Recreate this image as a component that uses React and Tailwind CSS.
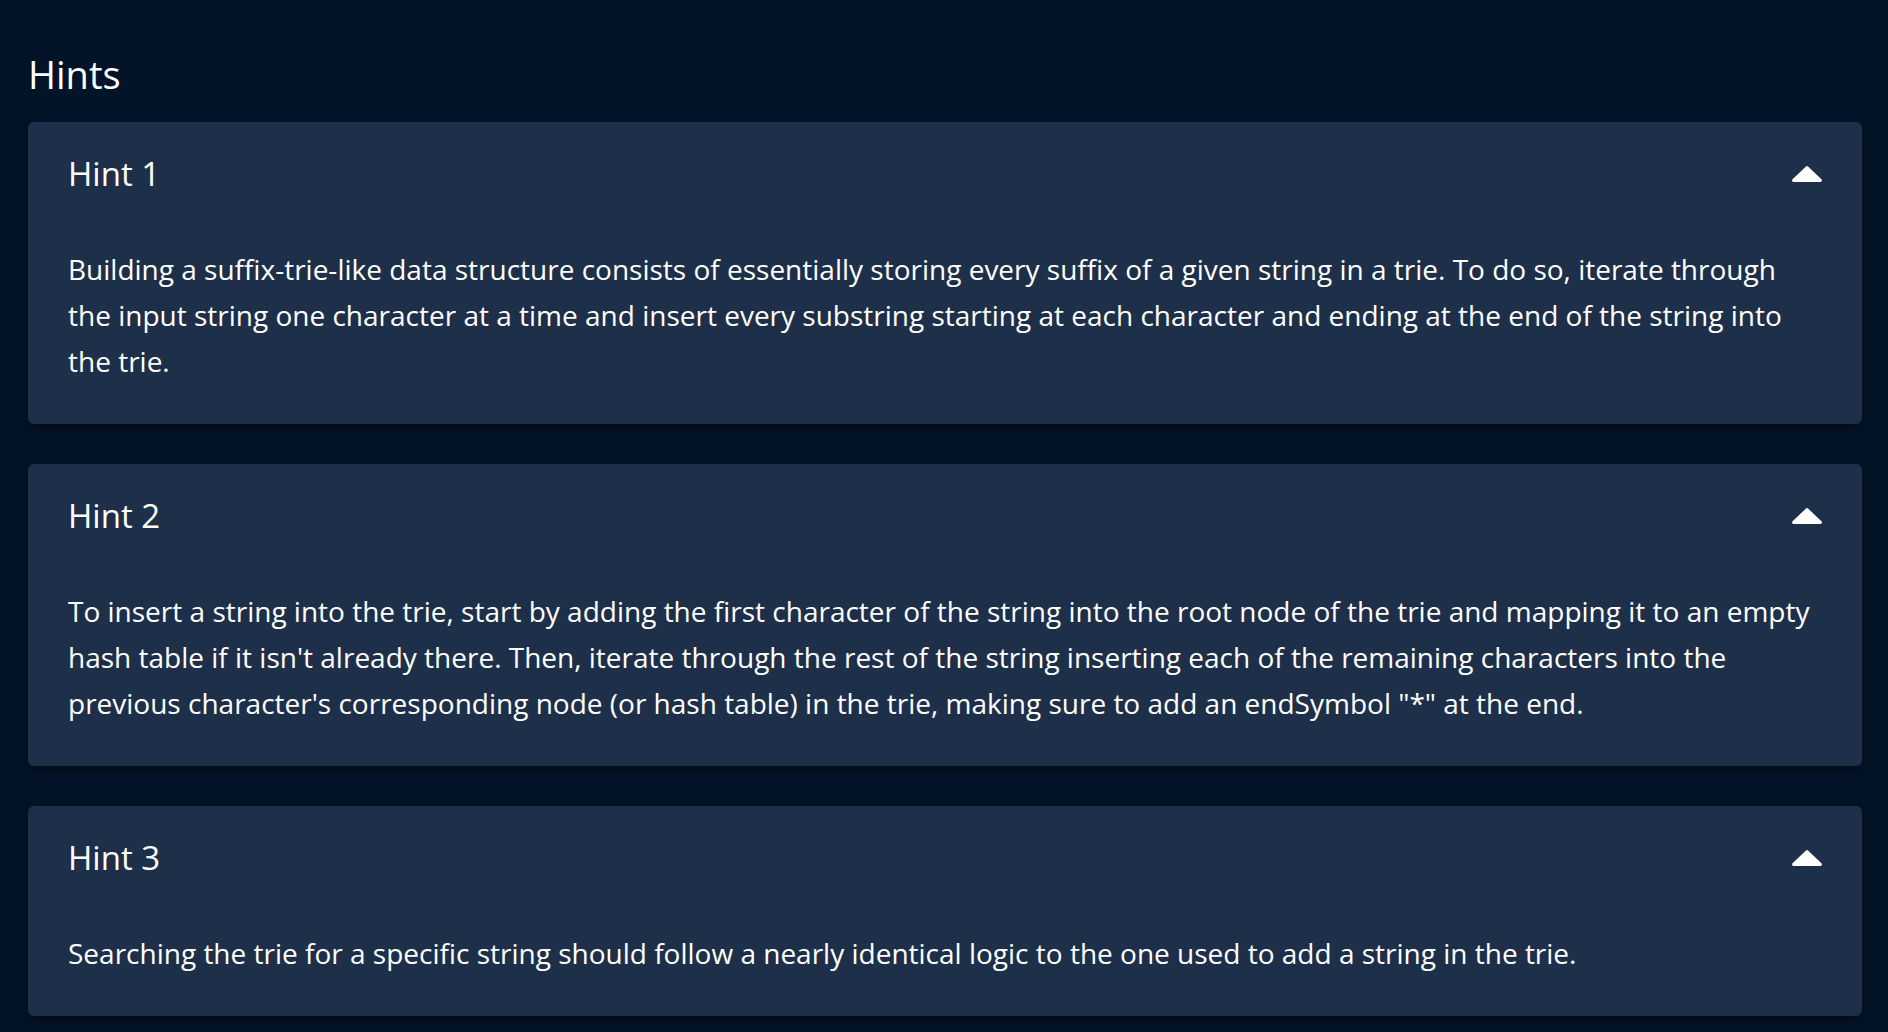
import React from 'react';

const hints = [
    {
        title: 'Hint 1',
        text: 'Building a suffix-trie-like data structure consists of essentially storing every suffix of a given string in a trie. To do so, iterate through the input string one character at a time and insert every substring starting at each character and ending at the end of the string into the trie.',
    },
    {
        title: 'Hint 2',
        text: 'To insert a string into the trie, start by adding the first character of the string into the root node of the trie and mapping it to an empty hash table if it isn\'t already there. Then, iterate through the rest of the string inserting each of the remaining characters into the previous character\'s corresponding node (or hash table) in the trie, making sure to add an endSymbol "*" at the end.',
    },
    {
        title: 'Hint 3',
        text: 'Searching the trie for a specific string should follow a nearly identical logic to the one used to add a string in the trie.',
    },
];

const CaretUp = () => (
    <svg width="30" height="16" viewBox="0 0 30 16" aria-hidden="true">
        <polygon points="15,1.6 28.4,14.4 1.6,14.4" fill="#ffffff" stroke="#ffffff" strokeWidth="3" strokeLinejoin="round" />
    </svg>
);

const HintCard = ({ title, text }) => (
    <div className="rounded-md bg-[#1e3049] px-10 pt-[29px] pb-[40px] shadow-[0_4px_10px_rgba(0,0,0,0.45)]">
        <div className="flex items-center justify-between">
            <h3 className="text-[33px] leading-[45px] font-normal text-white">{title}</h3>
            <CaretUp />
        </div>
        <p className="mt-[50px] text-[28px] leading-[46px] text-white">{text}</p>
    </div>
);

const App = () => {
    return (
        <div className="min-h-screen w-full bg-[#031428] pl-[28px] pr-[26px] pt-[48px] pb-6 font-['Open_Sans',_'DejaVu_Sans',_sans-serif]">
            <h2 className="mb-[22px] text-[38px] leading-[52px] text-white">Hints</h2>
            <div className="flex flex-col gap-10">
                {hints.map((hint) => (
                    <HintCard key={hint.title} title={hint.title} text={hint.text} />
                ))}
            </div>
        </div>
    );
};

export default App;
